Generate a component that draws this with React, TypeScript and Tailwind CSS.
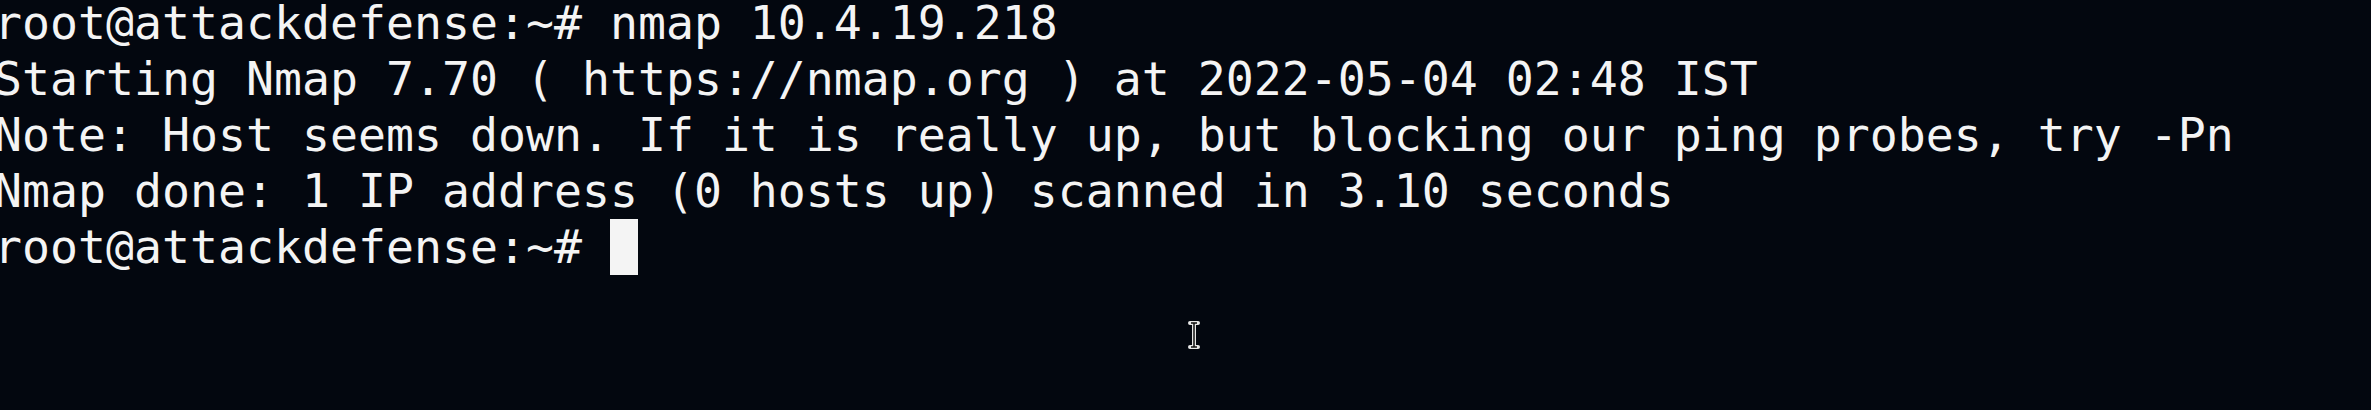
export default function App() {
  const lines = [
    "root@attackdefense:~# nmap 10.4.19.218",
    "Starting Nmap 7.70 ( https://nmap.org ) at 2022-05-04 02:48 IST",
    "Note: Host seems down. If it is really up, but blocking our ping probes, try -Pn",
    "Nmap done: 1 IP address (0 hosts up) scanned in 3.10 seconds",
  ];
  return (
    <div className="relative w-[2371px] h-[410px] overflow-hidden bg-[#03070f]">
      <div className="-mt-[5px] -ml-[6px] text-[#f4f4f4] text-[46.5px] leading-[56px] whitespace-pre font-['DejaVu_Sans_Mono',monospace]">
        {lines.map((l, i) => (
          <div key={i} className="h-[56px]">{l}</div>
        ))}
        <div className="h-[56px] flex">
          <span>root@attackdefense:~# </span>
          <span className="inline-block w-[28px] h-[56px] bg-[#f4f4f4]" />
        </div>
      </div>
      <svg className="absolute left-[1187px] top-[321px]" width="14" height="28" viewBox="0 0 14 28">
        <path d="M3 2 H11 M7 2 V26 M3 26 H11" stroke="#e8e8e8" strokeWidth="4" strokeLinecap="round" fill="none" />
        <path d="M4 2 H10 M7 2 V26 M4 26 H10" stroke="#111" strokeWidth="1.5" fill="none" />
      </svg>
    </div>
  );
}
